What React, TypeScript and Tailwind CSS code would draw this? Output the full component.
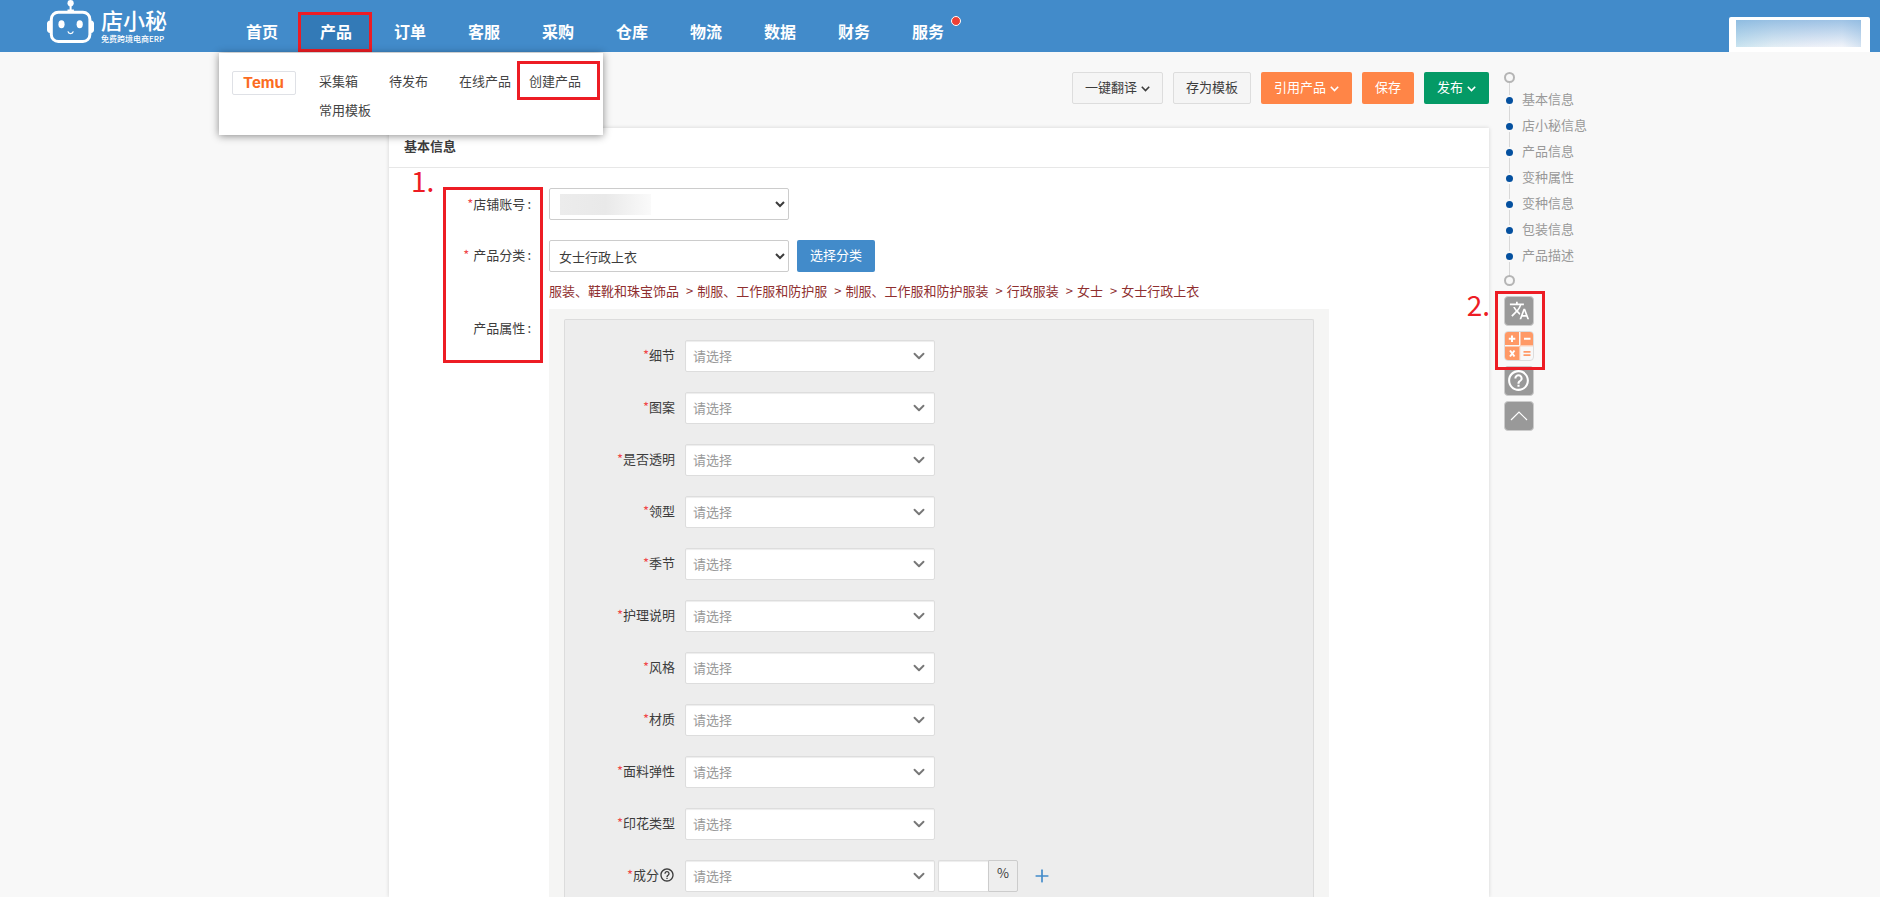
import { MdHelpOutline, MdTranslate } from "react-icons/md";
import { ChevronDown, Plus } from "lucide-react";

const NAV = ["首页", "产品", "订单", "客服", "采购", "仓库", "物流", "数据", "财务", "服务"];
const MENU = ["采集箱", "待发布", "在线产品", "创建产品", "常用模板"];
const CATEGORY = [
  "服装、鞋靴和珠宝饰品",
  "制服、工作服和防护服",
  "制服、工作服和防护服装",
  "行政服装",
  "女士",
  "女士行政上衣",
];
const ATTRIBUTES = [
  "细节",
  "图案",
  "是否透明",
  "领型",
  "季节",
  "护理说明",
  "风格",
  "材质",
  "面料弹性",
  "印花类型",
  "成分",
];
const SECTIONS = ["基本信息", "店小秘信息", "产品信息", "变种属性", "变种信息", "包装信息", "产品描述"];

function Star() {
  return <span className="text-[#f0484a]">*</span>;
}

function Caret() {
  return (
    <svg width="9" height="6" viewBox="0 0 9 6" className="mt-1 shrink-0" fill="none" stroke="currentColor" strokeWidth="1.6">
      <path d="M0.8 0.8 4.5 4.5 8.2 0.8" />
    </svg>
  );
}

function Logo() {
  return (
    <a href="#" className="flex w-[177px] shrink-0 gap-[7px] text-white">
      <svg width="47" height="44" viewBox="0 0 47 44" fill="none" className="shrink-0">
        <circle cx="23.6" cy="3.2" r="3.1" fill="#fff" />
        <path d="M23.6 5v6M20.5 10.5h6.4" stroke="#fff" strokeWidth="2" />
        <rect x="4.3" y="12.2" width="38.6" height="29.4" rx="7" stroke="#fff" strokeWidth="3" />
        <path d="M3.2 20.5v12.6C1 33 0 31.5 0 30v-6.5C0 22 1 20.6 3.2 20.5zM43.9 20.5v12.6c2.2-.1 3.1-1.6 3.1-3.1v-6.5c0-1.5-.9-2.9-3.1-3z" fill="#fff" />
        <ellipse cx="14.5" cy="24.2" rx="3.1" ry="4" fill="#fff" />
        <ellipse cx="32.7" cy="24.2" rx="3.1" ry="4" fill="#fff" />
        <path d="M20.9 31.4c.6 2.9 4.8 2.9 5.4 0" stroke="#fff" strokeWidth="1.2" />
      </svg>
      <span className="flex flex-col pt-[7px]">
        <span className="text-[22px] leading-6 font-medium">店小秘</span>
        <span className="mt-[3px] text-[8px] leading-[10px] font-medium whitespace-nowrap">免费跨境电商ERP</span>
      </span>
    </a>
  );
}

function ProductMenu() {
  return (
    <div className="absolute top-[53px] left-[219px] z-20 flex h-[82px] w-[384px] bg-white pt-[17px] pl-[13px] shadow-[0_1px_8px_rgba(0,0,0,0.45)]">
      <a
        href="#"
        className="mt-px flex h-6 w-16 items-center justify-center rounded-xs border border-[#dfe1e6] pr-px font-['Inter',sans-serif] text-[15px] font-bold text-[#fb6c22]"
      >
        Temu
      </a>
      <ul className="ml-[23px] grid w-[280px] grid-cols-4 content-start gap-y-2 text-[#444]">
        {MENU.map((item) => (
          <li key={item} className="relative">
            <a href="#" className="block leading-[21px] whitespace-nowrap">
              {item}
            </a>
            {item === "创建产品" && (
              <span className="pointer-events-none absolute -top-[9px] -left-3 h-[39px] w-[83px] border-3 border-[#ed1c24]" />
            )}
          </li>
        ))}
      </ul>
    </div>
  );
}

function Header() {
  return (
    <header className="relative flex h-[52px] justify-between bg-[#428bca] pr-2.5 pl-[47px]">
      <div className="flex">
        <Logo />
        <nav className="flex h-10 self-end">
          {NAV.map((item) => (
            <a
              key={item}
              href="#"
              className={
                item === "产品"
                  ? "relative flex w-[74px] items-center border-3 border-[#ed1c24] bg-[#337ab7] pb-0.5 pl-[19px] text-base font-bold text-white"
                  : "relative flex w-[74px] items-center border-3 border-transparent pb-0.5 pl-[19px] text-base font-bold text-white"
              }
            >
              {item}
              {item === "服务" && (
                <span className="absolute top-px left-[58px] size-2.5 rounded-full border border-white bg-[#ee4035]" />
              )}
            </a>
          ))}
        </nav>
      </div>
      <div className="mt-[17px] w-[141px] rounded-t-xs bg-white px-[7px] pt-[3px]">
        <div className="h-[27px] w-[125px] bg-[linear-gradient(to_bottom,rgba(130,178,222,0.75),rgba(240,244,250,0.35)),linear-gradient(to_right,#b5dbea,#dcebf2_30%,#eceff7_60%,#f4f5fa_85%,#c9dcee)]" />
      </div>
      <ProductMenu />
    </header>
  );
}

function Toolbar() {
  return (
    <div className="flex justify-end gap-2.5">
      <button className="flex h-8 items-center gap-1 rounded-xs border border-[#ddd] bg-[#f5f5f5] px-3 pb-0.5">
        一键翻译
        <Caret />
      </button>
      <button className="h-8 rounded-xs border border-[#ddd] bg-[#f5f5f5] px-3 pb-0.5">存为模板</button>
      <button className="flex h-8 items-center gap-1 rounded-xs bg-[#ff8547] px-[13px] pb-0.5 text-white">
        引用产品
        <Caret />
      </button>
      <button className="h-8 rounded-xs bg-[#ff8547] px-[13px] pb-0.5 text-white">保存</button>
      <button className="flex h-8 items-center gap-1 rounded-xs bg-[#049a66] px-[13px] pb-0.5 text-white">
        发布
        <Caret />
      </button>
    </div>
  );
}

function AttributeRow({ name }: { name: string }) {
  return (
    <div className="flex h-8">
      <label htmlFor={name} className="flex w-[110px] shrink-0 items-center justify-end pb-0.5">
        <Star />
        {name}
        {name === "成分" && <MdHelpOutline size={16} />}
      </label>
      <div className="relative ml-2.5 w-[250px]">
        <select
          id={name}
          className="h-8 w-full appearance-none rounded-xs border border-[#ddd] bg-white px-[7px] text-[#999] shadow-[inset_0_1px_1px_rgba(0,0,0,0.075)]"
        >
          <option>请选择</option>
        </select>
        <ChevronDown size={18} strokeWidth={2.5} className="pointer-events-none absolute top-[7px] right-[7px] text-[#777]" />
      </div>
      {name === "成分" && (
        <>
          <input
            aria-label="成分百分比"
            className="ml-[3px] w-[50px] rounded-l-xs border border-r-0 border-[#ddd] bg-white px-2 shadow-[inset_0_1px_1px_rgba(0,0,0,0.075)]"
          />
          <span className="w-[30px] rounded-r-xs border border-[#ccc] bg-[#eee] pt-0.5 text-center leading-5">%</span>
          <button type="button" aria-label="添加" className="ml-3.5 text-[#428bca]">
            <Plus size={20} />
          </button>
        </>
      )}
    </div>
  );
}

function BasicInfo() {
  return (
    <section className="mt-6 flex flex-1 flex-col bg-white shadow-[0_0_4px_rgba(0,0,0,0.15)]">
      <h2 className="h-10 border-b border-[#e7e7e7] px-[15px] leading-9 font-bold">基本信息</h2>
      <form className="relative flex flex-1 flex-col pt-5">
        <div className="flex h-8">
          <label htmlFor="shop" className="flex w-40 items-center justify-end pr-[18px]">
            <Star />
            店铺账号
            <span className="ml-0.5">:</span>
          </label>
          <div className="relative w-60">
            <select id="shop" className="h-8 w-full rounded-xs border border-[#ccc] bg-white pl-[5px]">
              <option></option>
            </select>
            <span className="pointer-events-none absolute top-1.5 left-[11px] h-[21px] w-[91px] bg-linear-to-r from-[#ececec] via-[#e9e9e9] to-[#fafafa]" />
          </div>
        </div>
        <div className="mt-5 flex h-8">
          <label htmlFor="category" className="flex w-40 items-center justify-end pr-[18px] pb-0.5">
            <Star />
            <span className="ml-1">产品分类</span>
            <span className="ml-0.5">:</span>
          </label>
          <select id="category" className="h-8 w-60 rounded-xs border border-[#ccc] bg-white pl-[5px]">
            <option>女士行政上衣</option>
          </select>
          <button type="button" className="ml-2 h-8 rounded-xs bg-[#428bca] px-[13px] pb-0.5 text-white">
            选择分类
          </button>
        </div>
        <p className="pt-[9px] pb-2 pl-40 leading-5 text-[#8f2f2f]">
          {CATEGORY.map((part, i) => (
            <span key={part}>
              {i > 0 && <span className="mr-1 ml-[7px]">&gt;</span>}
              {part}
            </span>
          ))}
        </p>
        <div className="flex flex-1">
          <span className="w-40 pt-[9px] pr-[18px] text-right leading-5">
            产品属性<span className="ml-0.5">:</span>
          </span>
          <div className="flex w-[780px] flex-col bg-[#f5f5f4] px-[15px] pt-2.5">
            <div className="flex flex-1 flex-col gap-5 rounded-t-xs border border-b-0 border-[#dcdcdc] bg-[#ededed] pt-5">
              {ATTRIBUTES.map((name) => (
                <AttributeRow key={name} name={name} />
              ))}
            </div>
          </div>
        </div>
        <span className="pointer-events-none absolute top-[19px] left-[54px] h-[176px] w-[100px] border-3 border-[#ed1c24]" />
        <span className="pointer-events-none absolute -top-0.5 left-[22px] text-[28px] leading-7 text-[#ed1c24]">1.</span>
      </form>
    </section>
  );
}

function SideRail() {
  return (
    <aside className="pl-[15px] text-[#999]">
      <div className="relative">
        <span className="absolute inset-y-2.5 left-[5px] w-px bg-[#d8d8d8]" />
        <span className="relative block size-[11px] rounded-full border-2 border-[#b5b5b5] bg-[#f8f8f8]" />
        <ul className="relative pt-1 pb-1.5">
          {SECTIONS.map((item) => (
            <li key={item}>
              <a href="#" className="flex h-[26px] items-center gap-[7px] whitespace-nowrap">
                <span className="size-[11px] rounded-full border-2 border-[#f8f8f8] bg-[#04509f]" />
                <span className="pb-0.5">{item}</span>
              </a>
            </li>
          ))}
        </ul>
        <span className="relative block size-[11px] rounded-full border-2 border-[#b5b5b5] bg-[#f8f8f8]" />
      </div>
      <div className="relative mt-2.5 flex w-[30px] flex-col gap-[5px]">
        <button aria-label="翻译" className="flex size-[30px] items-center justify-center rounded-sm border border-[#ccc] bg-[#999] pb-0.5 text-white">
          <MdTranslate size={21} />
        </button>
        <button aria-label="计算器" className="size-[30px] overflow-hidden rounded-sm border border-[#ddd] bg-[#f8f8f8]">
          <svg width="28" height="28" viewBox="0 0 28 28" fill="none">
            <path d="M0 0h14v13H0zM15.5 0H28v13H15.5zM0 14.5h14V28H0z" fill="#ff9966" />
            <path d="M14.7 14v14M15 13.8h13" stroke="#ffb996" />
            <path d="M7 3.5v6.5M3.8 6.8h6.5M19 6.8h6.5M5 18.5l4.5 6M9.5 18.5l-4.5 6" stroke="#fff" strokeWidth="2" />
            <path d="M18.5 19.8h7M18.5 23.2h7" stroke="#ff9966" strokeWidth="1.8" />
          </svg>
        </button>
        <button aria-label="帮助" className="flex size-[30px] items-center justify-center rounded-sm border border-[#ccc] bg-[#999] pr-px pb-px text-white">
          <MdHelpOutline size={25} className="shrink-0" />
        </button>
        <button aria-label="返回顶部" className="flex size-[30px] items-center justify-center rounded-sm border border-[#ccc] bg-[#999] text-white">
          <svg width="18" height="10" viewBox="0 0 18 10" fill="none" stroke="currentColor" strokeWidth="1.2">
            <path d="M1 9l8-8 8 8" />
          </svg>
        </button>
        <span className="pointer-events-none absolute -top-[5px] -left-[9px] h-[79px] w-[50px] border-3 border-[#ed1c24]" />
        <span className="pointer-events-none absolute -top-1.5 right-11 text-[28px] leading-7 text-[#ed1c24]">2.</span>
      </div>
    </aside>
  );
}

export default function App() {
  return (
    <div className="flex min-h-screen flex-col bg-[#f8f8f8] font-['Noto_Sans_CJK_SC',sans-serif] text-[13px] text-[#3c3c3c]">
      <Header />
      <main className="grid flex-1 grid-cols-[1fr_1100px_1fr] pt-5 pr-0.5">
        <div className="col-start-2 flex flex-col">
          <Toolbar />
          <BasicInfo />
        </div>
        <SideRail />
      </main>
    </div>
  );
}
